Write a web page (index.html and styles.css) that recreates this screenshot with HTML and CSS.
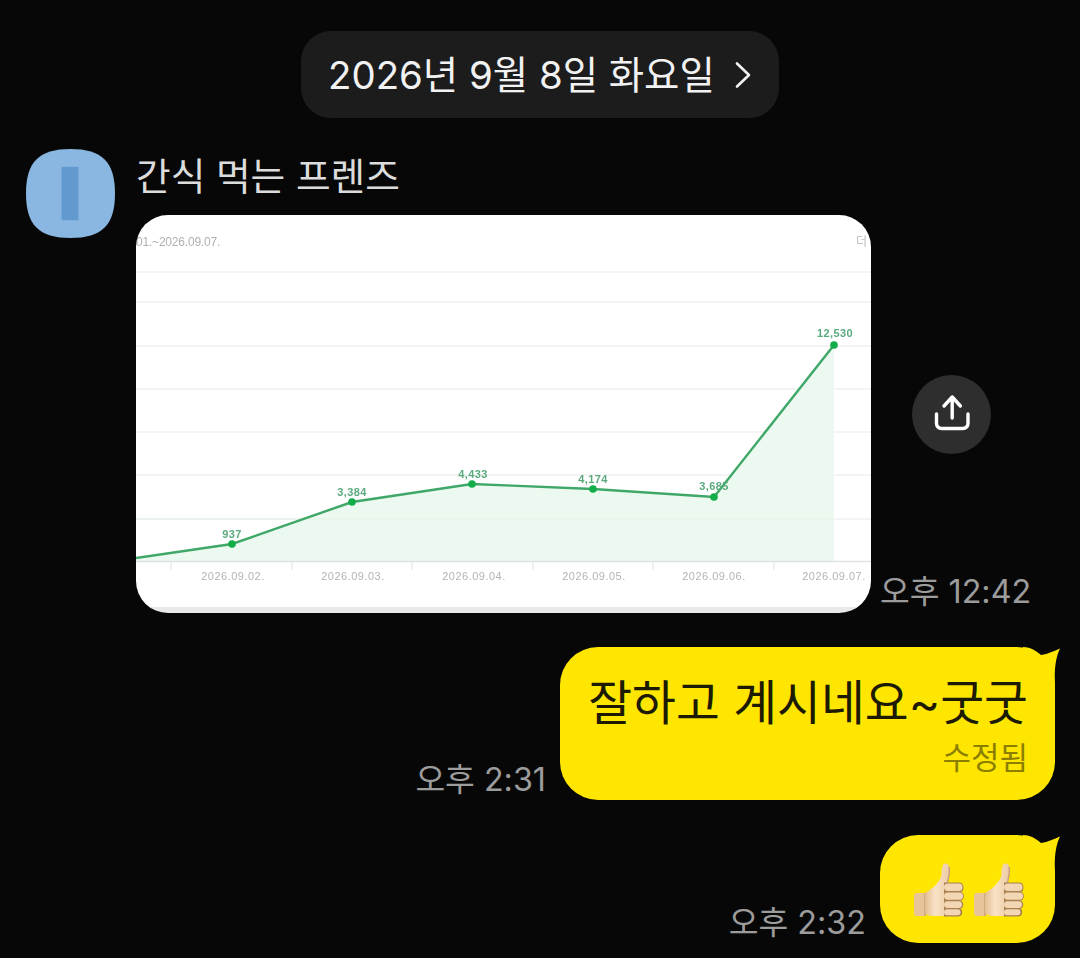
FILE: index.html
```html
<!DOCTYPE html>
<html lang="ko">
<head>
    <meta charset="UTF-8">
    <meta name="viewport" content="width=device-width, initial-scale=1.0">
    <title>간식 먹는 프렌즈</title>
    <link rel="stylesheet" href="styles.css">
</head>
<body>

<!-- Date -->
<div class="date-row">
    <div class="date-pill">
        <span class="date-text">2026년 9월 8일 화요일</span>
        <svg class="date-arrow" width="18" height="28" viewBox="0 0 18 28"><path d="M3 2.500l12 11.500L3 25.500" fill="none" stroke="#f2f2f2" stroke-width="2.600" stroke-linecap="round" stroke-linejoin="round"/></svg>
    </div>
</div>

<!-- Received message -->
<div class="received">
    <svg class="avatar" width="89" height="89" viewBox="0 0 90 90">
        <path d="M45 0C77 0 90 13 90 45 90 77 77 90 45 90 13 90 0 77 0 45 0 13 13 0 45 0Z" fill="#8ab6e2"/>
        <rect x="36" y="18" width="17" height="54" fill="#6299cf"/>
    </svg>
    <div class="received-body">
        <div class="sender">간식 먹는 프렌즈</div>
        <div class="received-row">
            <div class="chart-photo">
                <svg class="chart" width="735" height="398" viewBox="0 0 735 398">
                    <rect width="735" height="398" fill="#fff"/>
                    <rect y="392" width="735" height="6" fill="#e9e9e9"/>
                    <text x="0" y="31" class="t-range">01.~2026.09.07.</text>
                    <text x="720" y="31" class="t-more">더</text>
                    <g stroke="#f1f1f1" stroke-width="1.500">
                        <path d="M0 57H735M0 87H735M0 131H735M0 174H735M0 217H735M0 260H735M0 304H735"/>
                    </g>
                    <path d="M0 343L96 329 216 287 336 269 457 274 578 282 698 130V346H0Z" fill="#ecf9f0"/>
                    <path d="M0 304H698" stroke="#e6f3ea" stroke-width="1.500"/>
                    <path d="M0 346.500H735" stroke="#dfe3e4" stroke-width="1.500"/>
                    <path d="M35 347v8M156 347v8M276 347v8M397 347v8M517 347v8M638 347v8" stroke="#e2e2e2" stroke-width="1"/>
                    <path d="M0 343L96 329 216 287 336 269 457 274 578 282 698 130" fill="none" stroke="#3fa868" stroke-width="2.400"/>
                    <g fill="#12ad48">
                        <circle cx="96" cy="329" r="3.800"/>
                        <circle cx="216" cy="287" r="3.800"/>
                        <circle cx="336" cy="269" r="3.800"/>
                        <circle cx="457" cy="274" r="3.800"/>
                        <circle cx="578" cy="282" r="3.800"/>
                        <circle cx="698" cy="130" r="3.800"/>
                    </g>
                    <g class="t-value">
                        <text x="96" y="323">937</text>
                        <text x="216" y="281">3,384</text>
                        <text x="337" y="263">4,433</text>
                        <text x="457" y="268">4,174</text>
                        <text x="578" y="275">3,685</text>
                        <text x="699" y="122">12,530</text>
                    </g>
                    <g class="t-date">
                        <text x="97" y="365">2026.09.02.</text>
                        <text x="217" y="365">2026.09.03.</text>
                        <text x="338" y="365">2026.09.04.</text>
                        <text x="458" y="365">2026.09.05.</text>
                        <text x="578" y="365">2026.09.06.</text>
                        <text x="698" y="365">2026.09.07.</text>
                    </g>
                </svg>
            </div>
            <div class="photo-side">
                <button class="share-btn" aria-label="공유">
                    <svg width="44" height="44" viewBox="0 0 44 44" fill="none" stroke="#fff" stroke-width="3.400" stroke-linecap="round" stroke-linejoin="round">
                        <path d="M22.200 4v21M14 13l8.200-9 8.200 9"/>
                        <path d="M6.500 21v9c0 3.500 2 5.500 5.500 5.500h20.500c3.500 0 5.500-2 5.500-5.500v-9"/>
                    </svg>
                </button>
                <span class="time">오후 12:42</span>
            </div>
        </div>
    </div>
</div>

<!-- Sent messages -->
<div class="sent sent-first">
    <span class="time">오후 2:31</span>
    <div class="bubble bubble-text">
        <svg class="tail" width="40" height="40" viewBox="0 0 40 40"><path d="M2 0C10 0 15 4 20 8 27 7 33 4 39 1.500 35 10 33 20 34 40H2Z" fill="#ffe600"/></svg>
        <div class="bubble-msg">잘하고 계시네요~굿굿</div>
        <div class="edited">수정됨</div>
    </div>
</div>

<div class="sent sent-second">
    <span class="time">오후 2:32</span>
    <div class="bubble bubble-emoji">
        <svg class="tail" width="40" height="40" viewBox="0 0 40 40"><path d="M2 0C10 0 15 4 20 8 27 7 33 4 39 1.500 35 10 33 20 34 40H2Z" fill="#ffe600"/></svg>
        <svg class="thumb" width="50" height="54" viewBox="0 0 50 54"><use href="#thumb-up"/></svg>
        <svg class="thumb" width="50" height="54" viewBox="0 0 50 54"><use href="#thumb-up"/></svg>
    </div>
</div>

<svg class="defs" width="0" height="0">
    <defs>
        <linearGradient id="skin" x1="0" y1="0" x2="1" y2="0">
            <stop offset="0" stop-color="#e3bd92"/>
            <stop offset=".4" stop-color="#f9e2c6"/>
            <stop offset="1" stop-color="#eccba3"/>
        </linearGradient>
        <g id="thumb-up">
            <path d="M3 30h9v23H3c-2 0-3-1-3-3V33c0-2 1-3 3-3Z" fill="#e8c49b"/>
            <path d="M11 30v23" stroke="#c39a6d" stroke-width="1.200"/>
            <path d="M11 30c7-4 13-9 16-16 1-4 0-8 2-12 1-2 5-2 6 1 2 5 0 10-1 14l-1 5v31H19c-4 0-6-1-8-3Z" fill="url(#skin)"/>
            <path d="M35 4c1 4 0 9-1 13l-1 5" fill="none" stroke="#c9a077" stroke-width="1.500"/>
            <path d="M30 19.500h15c3 0 4.500 2 4.500 5S48 29 46 29c3 0 3.800 2 3.800 4.300S48.500 37.700 46 37.700c2.500 0 3.200 2 3.200 4s-1 4-3.500 4c2 0 2.500 2 2.500 3.500 0 2.800-1.500 4.300-4.500 4.300H30Z" fill="#a98052"/>
            <g fill="#f3d6b4">
                <rect x="30" y="20.500" width="18.500" height="7.500" rx="3.700"/>
                <rect x="30" y="29.500" width="19" height="7.200" rx="3.600"/>
                <rect x="30" y="38.200" width="18" height="6.800" rx="3.400"/>
                <rect x="30" y="46.300" width="16.500" height="6" rx="3"/>
            </g>
        </g>
    </defs>
</svg>

</body>
</html>
```

FILE: styles.css
```css
* {
    box-sizing: border-box;
}
body {
    margin: 0;
    height: 958px;
    overflow: hidden;
    background-color: #070707;
    font-family: Inter, "Noto Sans CJK KR", "Noto Sans", sans-serif;
    color: #fff;
}
.date-row {
    display: flex;
    justify-content: center;
    padding-top: 31px;
}
.date-pill {
    display: flex;
    align-items: center;
    justify-content: space-between;
    width: 478px;
    height: 87px;
    padding: 0 27px 0 27px;
    border-radius: 30px;
    background-color: #1c1c1c;
    font-size: 38.400px;
    color: #f2f2f2;
    white-space: nowrap;
}
.date-text {
    margin-bottom: 5px;
}
.date-arrow {
    flex: none;
}
.received {
    display: flex;
    gap: 21px;
    margin-top: 31px;
    padding-left: 26px;
}
.avatar {
    flex: none;
}
.sender {
    height: 66px;
    font-size: 37.700px;
    line-height: 54px;
    color: #dcdcdc;
}
.received-row {
    display: flex;
    align-items: stretch;
}
.chart-photo {
    width: 735px;
    height: 398px;
    border-radius: 32px;
    overflow: hidden;
}
.chart {
    display: block;
    filter: blur(.4px);
}
.t-range {
    font-family: "Liberation Sans", sans-serif;
    font-size: 12px;
    letter-spacing: -.2px;
    fill: #b0b0b0;
}
.t-more {
    font-family: "Noto Sans CJK KR", sans-serif;
    font-size: 12px;
    fill: #bdbdbd;
}
.t-value text {
    font-family: "Liberation Sans", sans-serif;
    font-size: 11px;
    font-weight: 700;
    letter-spacing: .4px;
    fill: #5aaa7d;
    text-anchor: middle;
}
.t-date text {
    font-family: "Liberation Sans", sans-serif;
    font-size: 11px;
    letter-spacing: .5px;
    fill: #b4b4b4;
    text-anchor: middle;
}
.photo-side {
    display: flex;
    flex-direction: column;
    align-items: flex-start;
    justify-content: space-between;
    padding-left: 9px;
}
.share-btn {
    display: flex;
    align-items: center;
    justify-content: center;
    width: 79px;
    height: 79px;
    margin: 160px 0 0 32px;
    padding: 0;
    border: none;
    border-radius: 50%;
    background-color: #2e2e2e;
}
.time {
    font-size: 32.300px;
    line-height: 40px;
    color: #9c9c9c;
    white-space: nowrap;
}
.photo-side .time {
    margin-bottom: 1px;
}
.sent {
    display: flex;
    justify-content: flex-end;
    align-items: flex-end;
    gap: 14px;
    padding-right: 25px;
}
.sent-first {
    margin-top: 34px;
}
.sent-second {
    margin-top: 35px;
}
.bubble {
    position: relative;
    border-radius: 38px;
    background-color: #ffe600;
}
.tail {
    position: absolute;
    top: 0;
    right: -6px;
}
.bubble-text {
    width: 495px;
    height: 153px;
    padding: 26px 27px 0 27px;
    color: #1c1a00;
}
.bubble-msg {
    position: relative;
    font-size: 47.700px;
    line-height: 60px;
    text-align: right;
    white-space: nowrap;
}
.edited {
    margin-top: 5px;
    font-size: 31px;
    line-height: 40px;
    text-align: right;
    color: #8c7f00;
}
.bubble-emoji {
    display: flex;
    justify-content: center;
    align-items: center;
    gap: 10px;
    width: 175px;
    height: 108px;
    padding: 1px 0 0 3px;
}
.thumb {
    position: relative;
    filter: blur(.4px);
}
.defs {
    position: absolute;
}
```
